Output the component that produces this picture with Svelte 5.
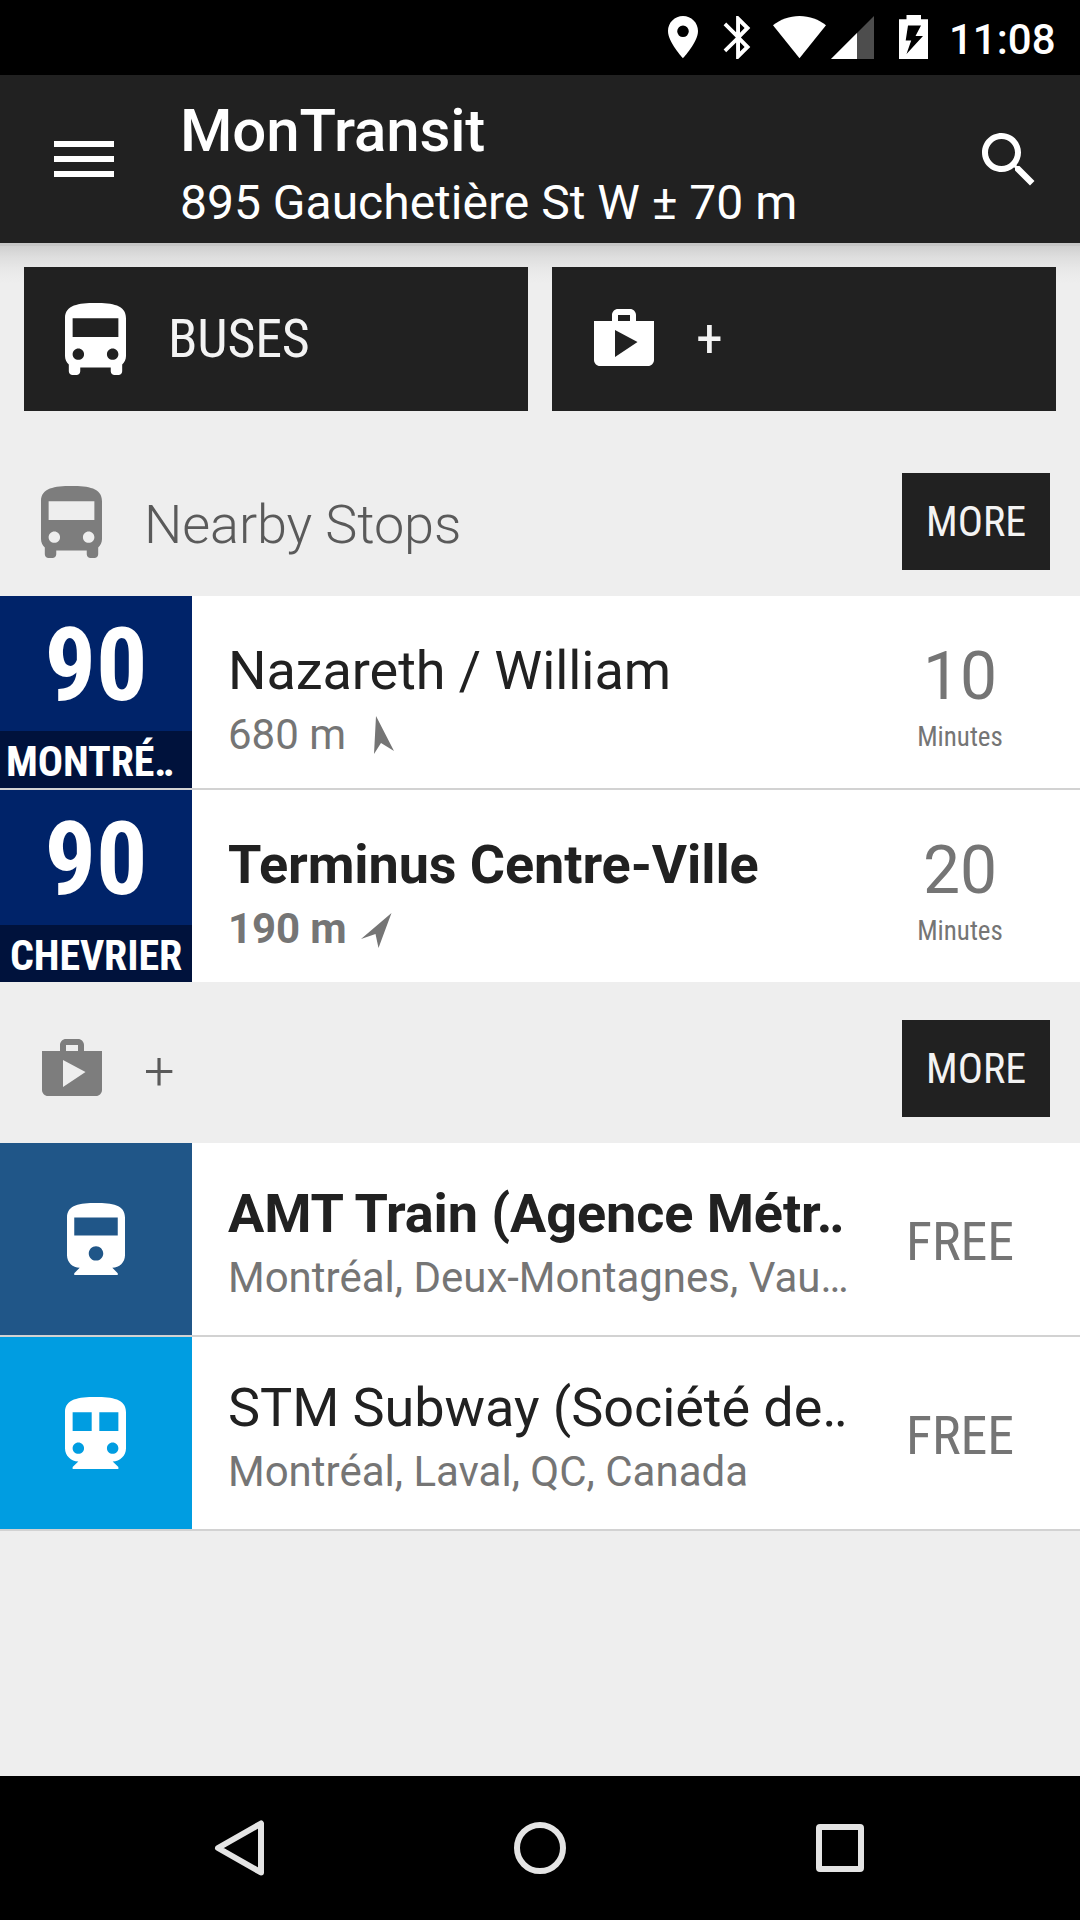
<script>
  const stops = [
    { route: '90', direction: 'MONTRÉ‥', cut: true, name: 'Nazareth / William', distance: '680 m', bold: false, wait: '10',
      arrow: '16,0 34,35 21,27 14,38' },
    { route: '90', direction: 'CHEVRIER', cut: false, name: 'Terminus Centre-Ville', distance: '190 m', bold: true, wait: '20',
      arrow: '30.5,3 17.5,38 14.5,24 0,29' },
  ];
  const modules = [
    { kind: 'train', name: 'AMT Train (Agence Métr‥', area: 'Montréal, Deux-Montagnes, Vau…', bold: true, price: 'FREE' },
    { kind: 'subway', name: 'STM Subway (Société de‥', area: 'Montréal, Laval, QC, Canada', bold: false, price: 'FREE' },
  ];
</script>

{#snippet bus()}
  <svg class="bus" width="61" height="72" viewBox="4 2 16 19" preserveAspectRatio="none" fill="currentColor">
    <path d="M4 16c0 .88.39 1.67 1 2.22V20c0 .55.45 1 1 1h1c.55 0 1-.45 1-1v-1h8v1c0 .55.45 1 1 1h1c.55 0 1-.45 1-1v-1.78c.61-.55 1-1.34 1-2.22V6c0-3.5-3.58-4-8-4s-8 .5-8 4v10zm3.5 1c-.83 0-1.5-.67-1.5-1.5S6.67 14 7.5 14s1.5.67 1.5 1.5S8.33 17 7.5 17zm9 0c-.83 0-1.5-.67-1.5-1.5s.67-1.5 1.5-1.5 1.5.67 1.5 1.5-.67 1.5-1.5 1.5zm1.5-6H6V6h12v5z" />
  </svg>
{/snippet}

{#snippet shop()}
  <svg class="shop" width="60" height="57" viewBox="2 2 20 19" fill="currentColor">
    <path d="M16 6V4c0-1.11-.89-2-2-2h-4c-1.11 0-2 .89-2 2v2H2v13c0 1.11.89 2 2 2h16c1.11 0 2-.89 2-2V6h-6zm-6-2h4v2h-4V4zM9 18V9l7.5 4L9 18z" />
  </svg>
{/snippet}

<div class="screen">
  <div class="status">
    <svg width="290" height="75" viewBox="660 0 290 75" fill="#fff">
      <path fill-rule="evenodd" d="M683 16c-8.3 0-15 6.700-15 15 0 11.200 15 27.300 15 27.300s15-16.100 15-27.300c0-8.300-6.700-15-15-15zm0 9.500a5.800 5.800 0 1 1 0 11.600 5.800 5.800 0 0 1 0-11.600z" />
      <path fill-rule="evenodd" d="M750.300 28.100L738.200 16h-2.100v16.200L726.200 22.500l-2.600 2.700 12.200 12.200-12.200 12.200 2.600 2.700 9.900-9.900V59h2.100l12.100-12.100-9.400-9.500zM740 23.500l4.600 4.600-4.600 4.700zm4.600 23.400l-4.600 4.700v-9.300z" />
      <path d="M799.500 58.300L826 25.300C819 19.500 809.500 16 799.500 16S780 19.500 773 25.300z" />
      <path d="M831 59h43V16z" opacity=".3" />
      <path d="M831 59h26V33z" />
      <path fill-rule="evenodd" d="M906.500 15h14.500v4.200h7V59h-29V19.200h7.500zM908 25.500l-2.300 15h5.500L906.500 54l16.500-18h-7.500l5.500-10.500z" />
    </svg>
    <span class="clock">11:08</span>
  </div>

  <header class="appbar">
    <svg class="menu" width="60" height="36" viewBox="0 0 60 36" fill="#fff">
      <path d="M0 0h60v6H0zM0 15h60v6H0zM0 30h60v6H0z" />
    </svg>
    <div class="heading">
      <h1>MonTransit</h1>
      <p>895 Gauchetière St W ± 70 m</p>
    </div>
    <svg class="search" width="72" height="72" viewBox="0 0 24 24" fill="#fff">
      <path d="M15.500 14h-.79l-.28-.27C15.410 12.590 16 11.110 16 9.500 16 5.910 13.090 3 9.500 3S3 5.910 3 9.500 5.910 16 9.500 16c1.610 0 3.090-.59 4.230-1.570l.27.28v.79l5 4.990L20.490 19l-4.990-5zm-6 0C7.010 14 5 11.990 5 9.500S7.010 5 9.500 5 14 7.010 14 9.500 11.990 14 9.500 14z" />
    </svg>
  </header>

  <main>
    <div class="tiles">
      <div class="tile"><span class="slot">{@render bus()}</span><span class="cond">BUSES</span></div>
      <div class="tile"><span class="slot">{@render shop()}</span><span class="cond">+</span></div>
    </div>

    <div class="section">
      <span class="slot">{@render bus()}</span>
      <h2>Nearby Stops</h2>
      <span class="more"><span class="cond">MORE</span></span>
    </div>
    {#each stops as s}
      <div class="row stop" class:bold={s.bold}>
        <div class="badge route">
          <div class="number cond">{s.route}</div>
          <div class="direction cond" class:cut={s.cut}>{s.direction}</div>
        </div>
        <div class="info">
          <div class="name">{s.name}</div>
          <div class="sub">
            <span>{s.distance}</span>
            <svg width="36" height="38" viewBox="0 0 36 38" fill="#757575"><polygon points={s.arrow} /></svg>
          </div>
        </div>
        <div class="side">
          <div class="wait">{s.wait}</div>
          <div class="unit cond">Minutes</div>
        </div>
      </div>
    {/each}

    <div class="section">
      <span class="slot">{@render shop()}</span>
      <h2>+</h2>
      <span class="more"><span class="cond">MORE</span></span>
    </div>
    {#each modules as m}
      <div class="row module" class:bold={m.bold}>
        <div class="badge {m.kind}">
          {#if m.kind === 'train'}
            <svg width="58" height="72" viewBox="4 1 16 20" preserveAspectRatio="none" fill="#fff">
              <path d="M4 15.500C4 17.430 5.570 19 7.500 19L6 20.500v.5h12v-.5L16.500 19c1.930 0 3.500-1.570 3.500-3.500V5c0-3.500-3.580-4-8-4s-8 .5-8 4v10.500zm8 1.500c-1.100 0-2-.9-2-2s.9-2 2-2 2 .9 2 2-.9 2-2 2zm6-7H6V5h12v5z" />
            </svg>
          {:else}
            <svg class="bus" width="61" height="72" viewBox="4 2 16 19" preserveAspectRatio="none" fill="#fff">
              <path d="M12 2c-4.420 0-8 .5-8 4v9.500C4 17.430 5.570 19 7.500 19L6 20.500v.5h12v-.5L16.500 19c1.930 0 3.500-1.570 3.500-3.500V6c0-3.500-3.580-4-8-4zM7.500 17c-.83 0-1.500-.67-1.500-1.500S6.670 14 7.500 14s1.500.67 1.500 1.500S8.330 17 7.500 17zm3.500-6H6V6h5v5zm5.500 6c-.83 0-1.500-.67-1.500-1.500s.67-1.500 1.500-1.500 1.500.67 1.500 1.500-.67 1.500-1.500 1.500zm1.500-6h-5V6h5v5z" />
            </svg>
          {/if}
        </div>
        <div class="info">
          <div class="name">{m.name}</div>
          <div class="sub"><span>{m.area}</span></div>
        </div>
        <div class="side"><div class="price cond">{m.price}</div></div>
      </div>
    {/each}
  </main>

  <nav>
    <svg width="60" height="60" viewBox="0 0 60 60"><path d="M51 5.500v49L8 30z" /></svg>
    <svg width="60" height="60" viewBox="0 0 60 60"><circle cx="30" cy="30" r="23" /></svg>
    <svg width="60" height="60" viewBox="0 0 60 60"><rect x="9" y="9" width="42" height="42" rx="1" /></svg>
  </nav>
</div>

<style>
  :global(body) { margin: 0; background: #eee; }
  .screen {
    width: 1080px;
    height: 1920px;
    display: flex;
    flex-direction: column;
    background: #eee;
    color: #212121;
    font-family: Roboto, "Liberation Sans", sans-serif;
    overflow: hidden;
    white-space: nowrap;
  }
  svg { display: block; flex: none; }
  h1, h2, p { margin: 0; font-weight: 400; }
  .cond { font-family: "Roboto Condensed", Roboto, sans-serif; font-stretch: 75%; }

  .status {
    height: 75px;
    background: #000;
    color: #fff;
    display: flex;
    justify-content: flex-end;
    padding-right: 25px;
  }
  .status svg { margin-right: -1px; }
  .clock { width: 106px; font-size: 42px; font-weight: 500; line-height: 79px; text-align: right; }

  .appbar {
    height: 168px;
    background: #212121;
    color: #fff;
    display: flex;
    align-items: center;
    padding: 0 35px 0 54px;
    flex: none;
  }
  .heading { flex: 1; margin-left: 66px; height: 168px; padding-top: 20px; box-sizing: border-box; }
  h1 { font-size: 60px; font-weight: 500; line-height: 72px; letter-spacing: -0.12px; }
  .heading p { font-size: 48px; line-height: 72px; }
  .search { margin-top: 1px; }

  main {
    flex: 1;
    background: linear-gradient(#c6c6c6 0 3px, #d0d0d0 3px, #dedede 14px, #e8e8e8 26px, #eee 40px);
    padding-top: 24px;
  }
  .tiles { display: grid; grid-template-columns: 1fr 1fr; gap: 24px; padding: 0 24px 24px; }
  .tile {
    height: 144px;
    background: #212121;
    color: #f3f3f3;
    display: flex;
    align-items: center;
    font-size: 54px;
  }
  .tile .cond { margin-top: -2px; letter-spacing: -0.2px; }
  .slot { width: 144px; display: flex; justify-content: center; color: #7d7d7d; flex: none; }
  .tile .slot { color: #fff; }
  .bus { margin-right: 1px; }
  .shop { margin-bottom: 3px; }

  .section { height: 161px; padding: 13px 30px 0 0; box-sizing: border-box; display: flex; align-items: center; }
  h2 { flex: 1; font-size: 54px; font-weight: 300; line-height: 64px; color: #5a5a5a; padding-top: 6px; letter-spacing: -0.1px; }
  .more {
    width: 148px;
    height: 97px;
    margin-bottom: 2px;
    line-height: 97px;
    text-align: center;
    background: #212121;
    color: #f3f3f3;
    font-size: 42px;
  }

  .row { height: 192px; display: flex; background: #fff; border-bottom: 2px solid #d2d2d2; }
  .stop.bold { border-bottom: 0; }
  .badge { width: 192px; display: flex; align-items: center; justify-content: center; color: #fff; flex: none; }
  .badge.route { background: #002369; flex-direction: column; font-weight: 700; }
  .train { background: #205688; }
  .subway { background: #009de1; }
  .number { height: 135px; font-size: 102px; line-height: 139px; }
  .direction { width: 192px; height: 57px; background: #00123c; font-size: 42px; line-height: 61px; text-align: center; letter-spacing: -0.1px; }
  .direction.cut { text-align: left; padding-left: 6px; box-sizing: border-box; }

  .info { width: 624px; padding: 43px 0 0 36px; box-sizing: content-box; flex: none; }
  .module .info { padding-top: 39px; }
  .name { font-size: 54px; line-height: 64px; letter-spacing: -0.06px; }
  .sub { font-size: 42px; line-height: 64px; color: #757575; display: flex; align-items: center; }
  .sub svg { margin-left: 14px; }
  .bold .name, .stop.bold .sub { font-weight: 700; letter-spacing: -0.1px; }

  .side { width: 216px; text-align: center; color: #757575; display: flex; flex-direction: column; }
  .wait { margin-top: 42px; font-size: 66px; line-height: 78px; }
  .unit { margin-top: 4px; font-size: 27px; line-height: 34px; }
  .price { margin-top: 67px; font-size: 54px; line-height: 64px; letter-spacing: -0.1px; }

  nav {
    height: 144px;
    background: #000;
    display: flex;
    align-items: center;
    justify-content: center;
    gap: 240px;
    flex: none;
  }
  nav svg { fill: none; stroke: #e4e4e4; stroke-width: 6; stroke-linejoin: round; }
</style>
